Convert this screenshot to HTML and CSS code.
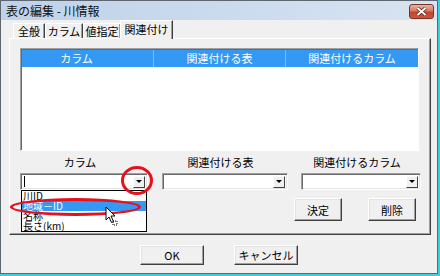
FILE: index.html
```html
<!DOCTYPE html>
<html lang="ja">
<head>
<meta charset="utf-8">
<link rel="stylesheet" href="styles.css">
</head>
<body>
<div class="window">
  <div class="titlebar">
    <span class="title">表の編集 - 川情報</span>
    <span class="close"><svg width="11" height="9" viewBox="0 0 11 9"><path d="M1.5 1 L9.5 8 M9.5 1 L1.5 8" stroke="#5a1a10" stroke-width="3.4"/><path d="M1.5 1 L9.5 8 M9.5 1 L1.5 8" stroke="#fff" stroke-width="2"/></svg></span>
  </div>
  <div class="content">
    <div class="tabs">
      <div class="tab t1">全般</div>
      <div class="tab t2">カラム</div>
      <div class="tab t3">値指定</div>
      <div class="tab active">関連付け</div>
    </div>
    <div class="panel">
      <div class="list">
        <div class="list-head">
          <div class="col c1">カラム</div>
          <div class="col c2">関連付ける表</div>
          <div class="col c3">関連付けるカラム</div>
        </div>
      </div>
      <div class="fields">
        <div class="field f1">
          <div class="label">カラム</div>
          <div class="combo">
            <span class="caret"></span>
            <span class="drop-btn"><span class="tri"></span></span>
            <div class="dropdown">
              <div class="item">川ID</div>
              <div class="item sel">地域－ID</div>
              <div class="item">名称</div>
              <div class="item">長さ(km)</div>
            </div>
          </div>
        </div>
        <div class="field f2">
          <div class="label">関連付ける表</div>
          <div class="combo"><span class="drop-btn"><span class="tri"></span></span></div>
        </div>
        <div class="field f3">
          <div class="label">関連付けるカラム</div>
          <div class="combo"><span class="drop-btn"><span class="tri"></span></span></div>
        </div>
      </div>
      <div class="actions">
        <button class="btn small">決定</button>
        <button class="btn small">削除</button>
      </div>
    </div>
    <div class="footer">
      <button class="btn wide">OK</button>
      <button class="btn wide">キャンセル</button>
    </div>
  </div>
  <div class="mark m1"></div>
  <div class="mark m2"></div>
  <svg class="cursor" width="14" height="20" viewBox="0 0 14 20"><path d="M1 1 L1 14 L4 11 L6.5 16.5 L8.5 15.5 L6 10 L10 10 Z" fill="#fff" stroke="#000" stroke-width="1" stroke-linejoin="round"/><path d="M8 15 h4 v4 h-4 z" fill="none" stroke="#000" stroke-width="1" stroke-dasharray="1 1"/></svg>
</div>
</body>
</html>
```
FILE: styles.css
```css
html, body {
  margin: 0;
  padding: 0;
}
body {
  width: 440px;
  height: 276px;
  background: #3fcfdc;
  font-family: "Noto Sans CJK JP", "Liberation Sans", sans-serif;
  font-size: 11px;
  color: #000;
  overflow: hidden;
}
.window {
  position: relative;
  width: 438px;
  height: 274px;
  box-sizing: border-box;
  border: 1px solid #5e6670;
  background: #f0f0f0;
  display: flex;
  flex-direction: column;
}
.titlebar {
  height: 19px;
  flex: none;
  background: linear-gradient(100deg, #bfd2ea 0%, #cddcee 60%, #d9e4f1 100%);
  display: flex;
  align-items: center;
  justify-content: space-between;
  padding: 0 3px 0 5px;
}
.title {
  font-size: 12px;
  line-height: 14px;
  color: #111;
}
.close {
  width: 23px;
  height: 13px;
  margin-top: 1px;
  border: 1px solid #7a3428;
  border-radius: 3px;
  background: linear-gradient(#e9b3a6 0%, #d77a66 45%, #c2452e 55%, #c9573f 100%);
  display: flex;
  align-items: center;
  justify-content: center;
}
.content {
  flex: 1;
  display: flex;
  flex-direction: column;
  padding: 0 6px 0 8px;
}
.tabs {
  height: 18px;
  display: flex;
  align-items: flex-end;
  padding-left: 4px;
  position: relative;
  z-index: 1;
}
.tab {
  height: 15px;
  box-sizing: border-box;
  line-height: 14px;
  border-top: 1px solid #fff;
  border-left: 1px solid #fff;
  border-right: 1px solid #404040;
  box-shadow: inset -1px 0 #a0a0a0;
  text-align: center;
}
.t1 { width: 32px; }
.t2 { width: 38px; }
.t3 { width: 38px; }
.tab.active {
  height: 19px;
  width: 53px;
  margin-left: -1px;
  margin-bottom: -1px;
  line-height: 16px;
  background: #f0f0f0;
  padding-bottom: 1px;
}
.panel {
  height: 197px;
  box-sizing: border-box;
  border-top: 1px solid #fff;
  border-left: 1px solid #fff;
  border-right: 1px solid #404040;
  border-bottom: 1px solid #404040;
  box-shadow: inset -1px -1px #a0a0a0;
  padding: 9px 11px 0 10px;
  display: flex;
  flex-direction: column;
}
.list {
  height: 103px;
  box-sizing: border-box;
  background: #fff;
  border: 1px solid;
  border-color: #a0a0a0 #fff #fff #a0a0a0;
  box-shadow: inset 1px 1px #696969;
  padding: 1px 0 0 1px;
}
.list-head {
  height: 17px;
  display: flex;
  background: #3399f5;
  color: #fff;
}
.col {
  line-height: 17px;
  text-align: center;
  box-sizing: border-box;
}
.c1 { width: 132px; padding-right: 22px; border-right: 1px solid #7fbcf7; }
.c2 { width: 132px; border-right: 1px solid #7fbcf7; }
.c3 { flex: 1; }
.fields {
  margin-top: 5px;
  display: flex;
  justify-content: space-between;
}
.f1 { width: 128px; }
.f2 { width: 126px; }
.f3 { width: 120px; margin-right: -2px; }
.label {
  height: 12px;
  line-height: 12px;
  text-align: center;
  padding-right: 8px;
  margin-bottom: 5px;
}
.combo {
  position: relative;
  height: 17px;
  box-sizing: border-box;
  background: #fff;
  border: 1px solid;
  border-color: #a0a0a0 #fff #fff #a0a0a0;
  box-shadow: inset 1px 1px #696969, inset -1px -1px #e3e3e3;
  display: flex;
  align-items: center;
  justify-content: flex-end;
  padding-right: 2px;
}
.caret {
  position: absolute;
  left: 3px;
  top: 2px;
  width: 1px;
  height: 11px;
  background: #000;
}
.drop-btn {
  width: 12px;
  height: 12px;
  box-sizing: border-box;
  background: #f0f0f0;
  border: 1px solid;
  border-color: #fff #404040 #404040 #fff;
  display: flex;
  align-items: center;
  justify-content: center;
}
.tri {
  width: 0;
  height: 0;
  border-left: 3px solid transparent;
  border-right: 3px solid transparent;
  border-top: 3px solid #000;
}
.dropdown {
  position: absolute;
  left: 0;
  top: 16px;
  width: 126px;
  height: 42px;
  box-sizing: border-box;
  border: 1px solid #000;
  background: #fff;
  z-index: 2;
}
.item {
  height: 10px;
  line-height: 10px;
  font-size: 10px;
  padding-left: 1px;
  white-space: nowrap;
}
.item.sel {
  background: #3399f5;
  color: #fff;
}
.actions {
  margin-top: 8px;
  display: flex;
  justify-content: flex-end;
  gap: 26px;
  padding-right: 3px;
}
.btn {
  font-family: inherit;
  font-size: 11px;
  color: #000;
  background: #f0f0f0;
  box-sizing: border-box;
  border: 1px solid;
  border-color: #fff #404040 #404040 #fff;
  box-shadow: inset -1px -1px #a0a0a0, inset 1px 1px #e3e3e3;
  padding: 0;
  margin: 0;
}
.small {
  width: 48px;
  height: 23px;
}
.footer {
  margin-top: 10px;
  display: flex;
  justify-content: center;
  gap: 30px;
  padding-right: 2px;
}
.wide {
  width: 64px;
  height: 20px;
}
.mark {
  position: absolute;
  border: 3px solid #e8101a;
  border-radius: 50%;
  box-sizing: border-box;
  z-index: 5;
}
.m1 {
  left: 120px;
  top: 165px;
  width: 32px;
  height: 29px;
}
.m2 {
  left: 9px;
  top: 197px;
  width: 131px;
  height: 18px;
}
.cursor {
  position: absolute;
  left: 104px;
  top: 205px;
  z-index: 6;
}
```
